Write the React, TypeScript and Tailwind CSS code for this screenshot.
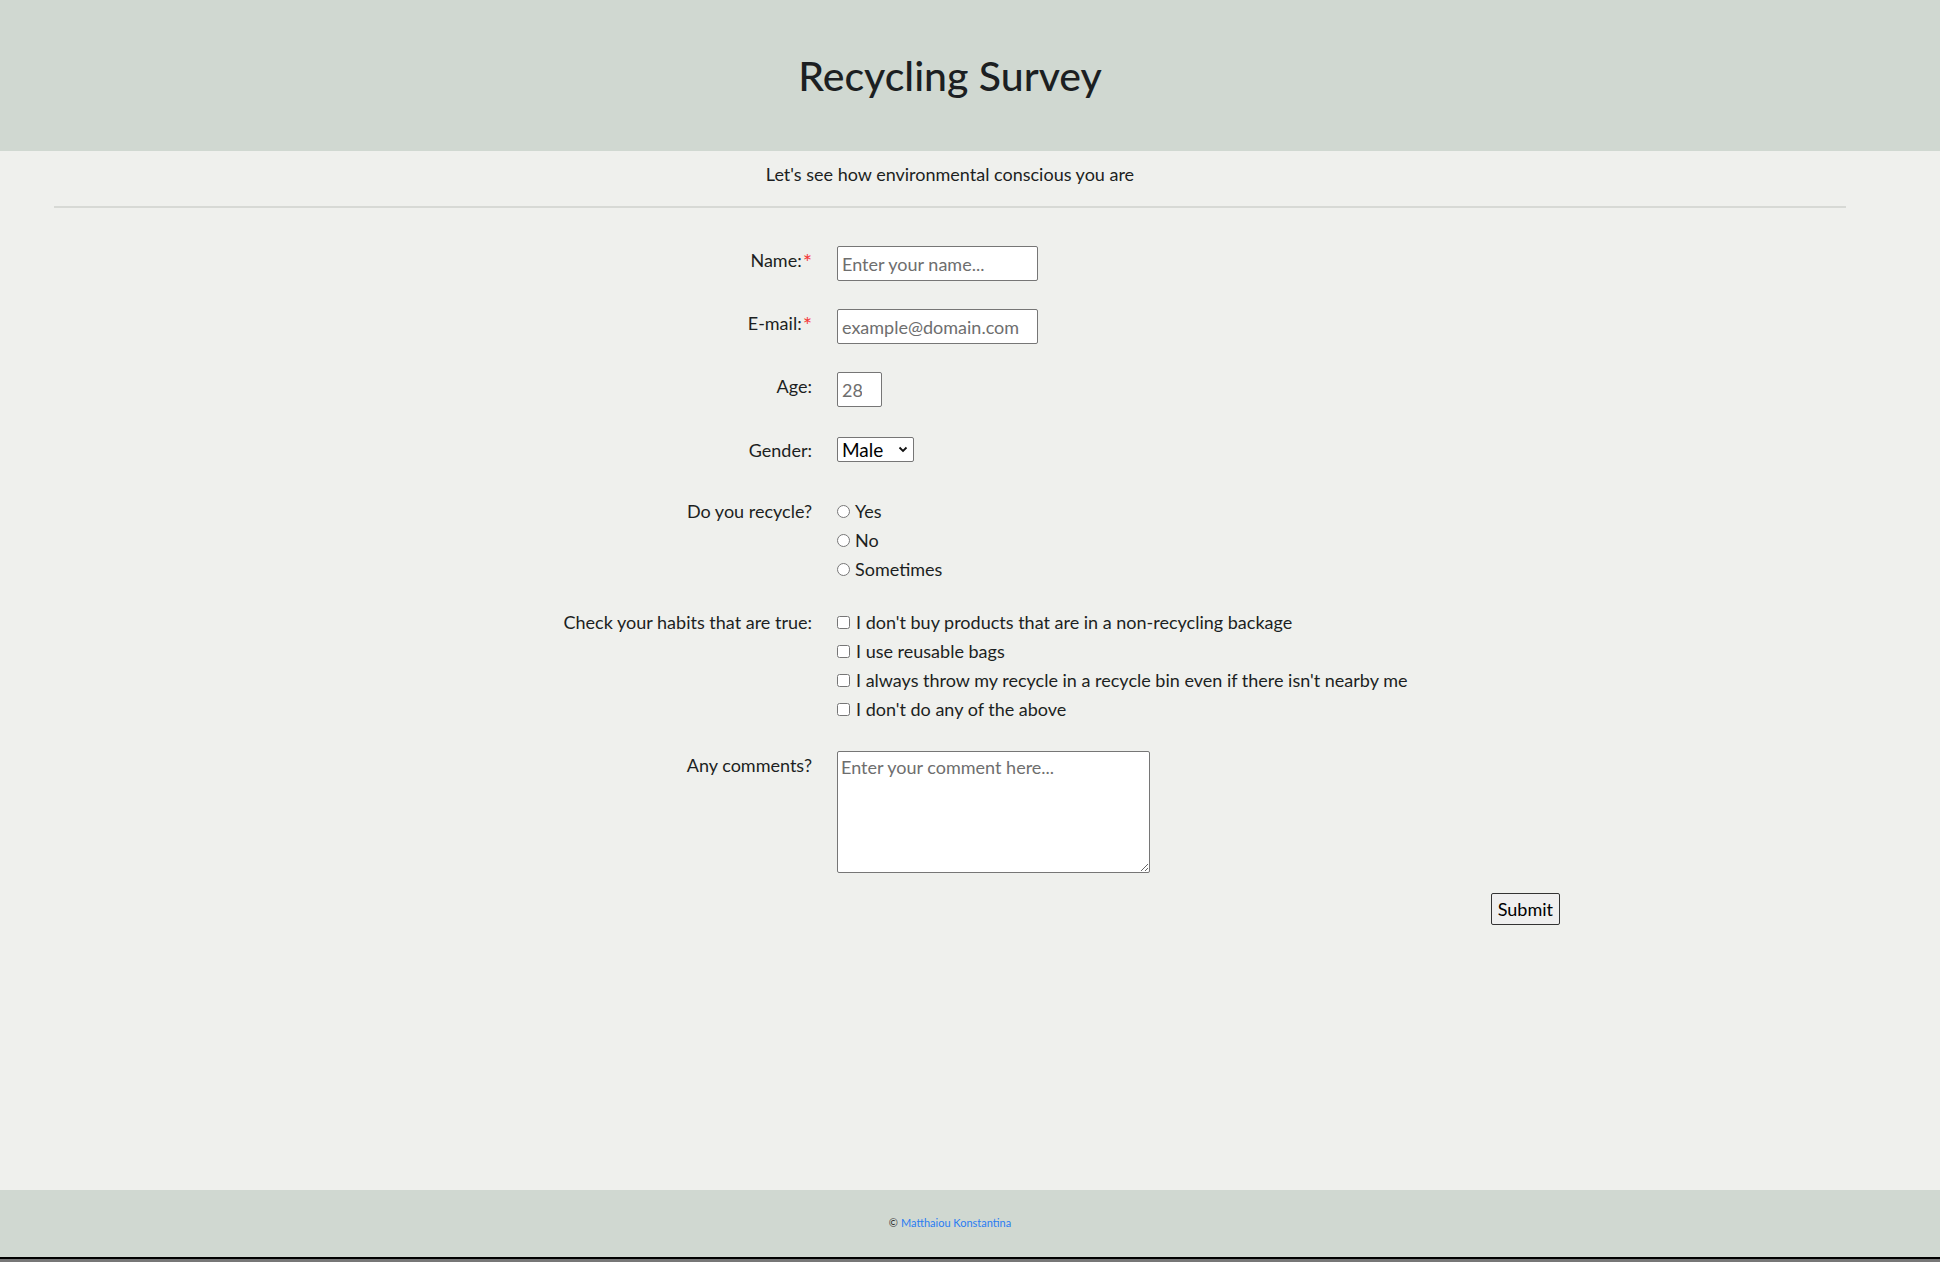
import { useState } from 'react';

const HABITS = [
  "I don't buy products that are in a non-recycling backage",
  'I use reusable bags',
  "I always throw my recycle in a recycle bin even if there isn't nearby me",
  "I don't do any of the above",
];

const RECYCLE = ['Yes', 'No', 'Sometimes'];

function Label({
  children,
  required,
  className = '',
}: {
  children: React.ReactNode;
  required?: boolean;
  className?: string;
}) {
  return (
    <label className={`w-[497px] shrink-0 text-right pr-[25px] leading-[23px] ${className}`}>
      {children}
      {required && <span className="text-[#f43b3b] text-[22px] leading-none ml-[1px] align-[-3px]">*</span>}
    </label>
  );
}

export default function App() {
  const [gender, setGender] = useState('male');

  return (
    <div className="min-h-screen flex flex-col bg-[#eff0ed] text-[#1c1f22] font-['Lato','Noto_Sans',sans-serif] text-[18px]">
      {/* Header */}
      <header className="h-[151px] bg-[#d0d8d1] flex items-center">
        <div className="w-[1900px] text-center">
          <h1 className="text-[41px] leading-none font-medium">Recycling Survey</h1>
        </div>
      </header>

      <main className="flex-1 w-[1900px]">
        <p className="text-center mt-[12px] leading-[23px]">Let's see how environmental conscious you are</p>
        <hr className="mx-[54px] mt-[20px] border-0 border-t-2 border-[#d7d9d5]" />

        <form className="w-[1220px] mx-auto pt-[38px]" onSubmit={(e) => e.preventDefault()}>
          {/* Name */}
          <div className="flex items-start">
            <Label required className="pt-[3px]">Name:</Label>
            <input
              type="text"
              placeholder="Enter your name..."
              className="w-[201px] h-[35px] px-[4px] bg-white border border-[#767676] rounded-[2px] placeholder:text-[#6e6e6e] outline-none"
            />
          </div>

          {/* Email */}
          <div className="flex items-start mt-[28px]">
            <Label required className="pt-[3px]">E-mail:</Label>
            <input
              type="email"
              placeholder="example@domain.com"
              className="w-[201px] h-[35px] px-[4px] bg-white border border-[#767676] rounded-[2px] placeholder:text-[#6e6e6e] outline-none"
            />
          </div>

          {/* Age */}
          <div className="flex items-start mt-[28px]">
            <Label className="pt-[3px]">Age:</Label>
            <input
              type="number"
              placeholder="28"
              className="w-[45px] h-[35px] px-[4px] bg-white border border-[#767676] rounded-[2px] placeholder:text-[#6e6e6e] outline-none"
            />
          </div>

          {/* Gender */}
          <div className="flex items-center mt-[30px]">
            <Label>Gender:</Label>
            <div className="relative">
              <select
                value={gender}
                onChange={(e) => setGender(e.target.value)}
                className="appearance-none w-[77px] h-[25px] pl-[4px] bg-white border border-[#767676] rounded-[2px] text-black text-[19px] leading-none outline-none"
              >
                <option value="male">Male</option>
                <option value="female">Female</option>
                <option value="other">Other</option>
              </select>
              <svg
                className="absolute right-[6px] top-[9px] pointer-events-none"
                width="10"
                height="7"
                viewBox="0 0 10 7"
                fill="none"
              >
                <path d="M1.5 1.5L5 5L8.5 1.5" stroke="#111" strokeWidth="1.8" />
              </svg>
            </div>
          </div>

          {/* Do you recycle */}
          <div className="flex items-start mt-[33px]">
            <Label className="pt-[3px]">Do you recycle?</Label>
            <div className="flex flex-col">
              {RECYCLE.map((opt) => (
                <label key={opt} className="flex items-center h-[29px] gap-[5px]">
                  <input type="radio" name="recycle" value={opt} className="w-[13px] h-[13px] m-0" />
                  <span>{opt}</span>
                </label>
              ))}
            </div>
          </div>

          {/* Habits */}
          <div className="flex items-start mt-[24px]">
            <Label className="pt-[3px]">Check your habits that are true:</Label>
            <div className="flex flex-col">
              {HABITS.map((h) => (
                <label key={h} className="flex items-center h-[29px] gap-[6px]">
                  <input type="checkbox" className="w-[13px] h-[13px] m-0" />
                  <span>{h}</span>
                </label>
              ))}
            </div>
          </div>

          {/* Comments */}
          <div className="flex items-start mt-[27px]">
            <Label className="pt-[3px]">Any comments?</Label>
            <textarea
              placeholder="Enter your comment here..."
              className="w-[313px] h-[122px] px-[3px] py-[2px] bg-white border border-[#767676] rounded-[2px] placeholder:text-[#6e6e6e] outline-none"
            />
          </div>

          <div className="flex justify-end mt-[20px]">
            <button
              type="submit"
              className="h-[32px] px-[6px] bg-[#efefef] border border-[#333] rounded-[2px] text-black"
            >
              Submit
            </button>
          </div>
        </form>
      </main>

      {/* Footer */}
      <footer className="bg-[#d0d8d1] border-b-2 border-black">
        <div className="h-[67px] w-[1900px] flex items-center justify-center text-[11px]">
          <span className="text-[#333]">©</span>
          <a href="#" className="ml-[3px] text-[#2a7cf2]">Matthaiou Konstantina</a>
        </div>
      </footer>
      <div className="h-[3px] bg-[#777]" />
    </div>
  );
}
